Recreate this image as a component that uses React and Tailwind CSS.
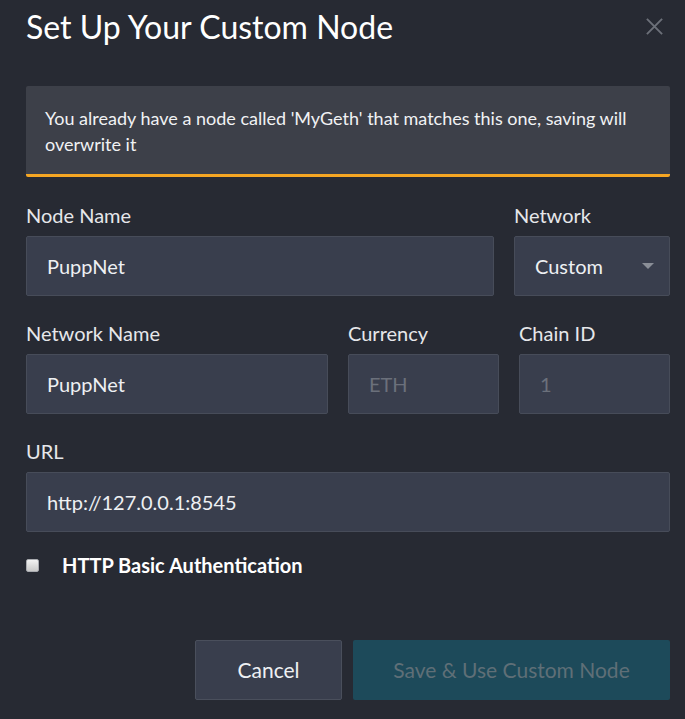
import { useState } from "react";

function Field({ label, children, className = "" }) {
  return (
    <div className={`flex flex-col ${className}`}>
      <label className="text-[20px] leading-6 text-[#e6e7ea] mb-[9px]">{label}</label>
      {children}
    </div>
  );
}

const inputCls =
  "h-[60px] w-full rounded-[2px] border border-[#474c59] bg-[#393e4d] px-5 text-[20px] text-[#eef0f3] caret-white outline-none";

export default function App() {
  const [nodeName, setNodeName] = useState("PuppNet");
  const [netName, setNetName] = useState("PuppNet");
  const [url, setUrl] = useState("http://127.0.0.1:8545");

  return (
    <div
      className="min-h-[719px] w-[685px] bg-[#272a33] pl-[26px] pr-[15px] pt-[7px]"
      style={{ fontFamily: "Lato, 'Open Sans', sans-serif" }}
    >
      <div className="flex items-start justify-between">
        <h1 className="text-[32px] leading-10 text-white">Set Up Your Custom Node</h1>
        <button className="mt-[10px] mr-[6px] text-[#6c7079]">
          <svg width="19" height="19" viewBox="0 0 20 20" stroke="currentColor" strokeWidth="2">
            <path d="M2 2 L18 18 M18 2 L2 18" />
          </svg>
        </button>
      </div>

      <div className="mt-[39px] rounded-[2px] border-b-[3px] border-[#f5a623] bg-[#3d4049] px-[19px] pt-[19px] pb-[17px] text-[18px] leading-[26px] text-[#f1f2f4]">
        You already have a node called 'MyGeth' that matches this one, saving will overwrite it
      </div>

      <div className="mt-[26px] flex gap-[20px]">
        <Field label="Node Name" className="w-[468px]">
          <input className={inputCls} value={nodeName} onChange={(e) => setNodeName(e.target.value)} />
        </Field>
        <Field label="Network" className="flex-1">
          <div className={`${inputCls} flex items-center justify-between`}>
            <span>Custom</span>
            <svg width="12" height="6" viewBox="0 0 12 6" className="mr-[-5px]">
              <path d="M0 0 H12 L6 6 Z" fill="#8a8e97" />
            </svg>
          </div>
        </Field>
      </div>

      <div className="mt-[25px] flex gap-[20px]">
        <Field label="Network Name" className="w-[302px]">
          <input className={inputCls} value={netName} onChange={(e) => setNetName(e.target.value)} />
        </Field>
        <Field label="Currency" className="w-[151px]">
          <input className={`${inputCls} placeholder:text-[#6b707b]`} placeholder="ETH" />
        </Field>
        <Field label="Chain ID" className="flex-1">
          <input className={`${inputCls} placeholder:text-[#6b707b]`} placeholder="1" />
        </Field>
      </div>

      <div className="mt-[25px]">
        <Field label="URL">
          <input autoFocus className={inputCls} value={url} onChange={(e) => setUrl(e.target.value)} />
        </Field>
      </div>

      <label className="mt-[19px] flex h-7 items-center gap-[23px]">
        <span className="h-[13px] w-[13px] rounded-[2px] border border-[#a9abb0] bg-gradient-to-b from-[#f2f2f2] to-[#c9c9c9]" />
        <span className="text-[20px] font-bold text-white">HTTP Basic Authentication</span>
      </label>

      <div className="mt-[61px] flex justify-end gap-[11px]">
        <button className="h-[60px] w-[147px] rounded-[2px] border border-[#4a4f5c] bg-[#393e4d] text-[21px] text-[#eef0f3]">
          Cancel
        </button>
        <button className="h-[60px] w-[317px] rounded-[2px] bg-[#1d4a5a] text-[21px] text-[#5f6f77]">
          Save &amp; Use Custom Node
        </button>
      </div>
    </div>
  );
}
